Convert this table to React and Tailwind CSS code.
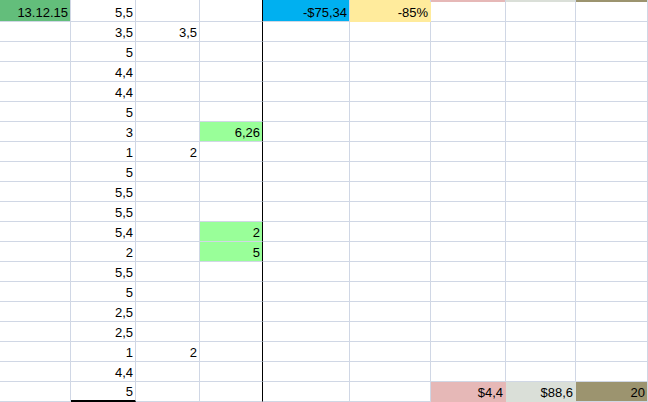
const cols = [71, 65, 64, 63, 87, 81, 75, 70, 72]

const GREEN = 'bg-[#63be7b] border-b-[#63be7b] border-r-[#63be7b]'
const LIME = 'bg-[#99ff99] border-b-[#99ff99]'
const BLUE = 'bg-[#00b0f0] border-b-[#00b0f0] border-r-[#00b0f0]'
const YELLOW = 'bg-[#ffeb9c] border-b-[#ffeb9c] border-r-[#ffeb9c]'
const PINK = 'bg-[#e6b8b7] border-b-[#e6b8b7] border-r-[#e6b8b7]'
const GRAY = 'bg-[#dadfd8] border-b-[#dadfd8] border-r-[#dadfd8]'
const OLIVE = 'bg-[#9c946f] border-b-[#9c946f] border-r-[#9c946f]'

// each row: [A, B, C, D, E, F, G, H, I], a cell is a value or { v, c }
const rows = [
  [{ v: '13.12.15', c: GREEN }, '5,5', '', '', { v: '-$75,34', c: BLUE }, { v: '-85%', c: YELLOW }, '', '', ''],
  ['', '3,5', '3,5', '', '', '', '', '', ''],
  ['', '5', '', '', '', '', '', '', ''],
  ['', '4,4', '', '', '', '', '', '', ''],
  ['', '4,4', '', '', '', '', '', '', ''],
  ['', '5', '', '', '', '', '', '', ''],
  ['', '3', '', { v: '6,26', c: LIME }, '', '', '', '', ''],
  ['', '1', '2', '', '', '', '', '', ''],
  ['', '5', '', '', '', '', '', '', ''],
  ['', '5,5', '', '', '', '', '', '', ''],
  ['', '5,5', '', '', '', '', '', '', ''],
  ['', '5,4', '', { v: '2', c: LIME }, '', '', '', '', ''],
  ['', '2', '', { v: '5', c: LIME }, '', '', '', '', ''],
  ['', '5,5', '', '', '', '', '', '', ''],
  ['', '5', '', '', '', '', '', '', ''],
  ['', '2,5', '', '', '', '', '', '', ''],
  ['', '2,5', '', '', '', '', '', '', ''],
  ['', '1', '2', '', '', '', '', '', ''],
  ['', '4,4', '', '', '', '', '', '', ''],
  [
    '',
    { v: '5', c: 'border-b-2 border-b-black' },
    '',
    '',
    '',
    '',
    { v: '$4,4', c: PINK },
    { v: '$88,6', c: GRAY },
    { v: '20', c: OLIVE },
  ],
]

// the bottom edge of the row scrolled above
const strip = ['bg-[#63be7b]', '', '', '', 'bg-[#00b0f0]', 'bg-[#ffeb9c]', 'bg-[#e6b8b7]', 'bg-[#dadfd8]', 'bg-[#9c946f]']

function Cell({ value, extra, col }) {
  const right = col === 3 ? 'border-r-black' : 'border-r-[#d0d7e5]'
  return (
    <div
      className={`h-5 border-b border-r border-b-[#d0d7e5] ${right} ${extra} flex items-center justify-end pr-[2px] pt-px overflow-hidden whitespace-nowrap text-[13px] leading-[19px] text-black`}
    >
      {value}
    </div>
  )
}

export default function App() {
  return (
    <div
      className="w-[648px] h-[402px] overflow-hidden bg-white"
      style={{ fontFamily: '"Liberation Sans", Arial, sans-serif' }}
    >
      <div className="grid grid-cols-[71px_65px_64px_63px_87px_81px_75px_70px_72px]">
        {strip.map((bg, i) => (
          <div
            key={`s${i}`}
            className={`h-[2px] border-r ${i === 3 ? 'border-r-black' : 'border-r-[#d0d7e5]'} ${bg}`}
          />
        ))}
        {rows.map((row, r) =>
          row.map((cell, c) => {
            const value = typeof cell === 'string' ? cell : cell.v
            const extra = typeof cell === 'string' ? '' : cell.c
            return <Cell key={`${r}-${c}`} value={value} extra={extra} col={c} />
          }),
        )}
      </div>
    </div>
  )
}
